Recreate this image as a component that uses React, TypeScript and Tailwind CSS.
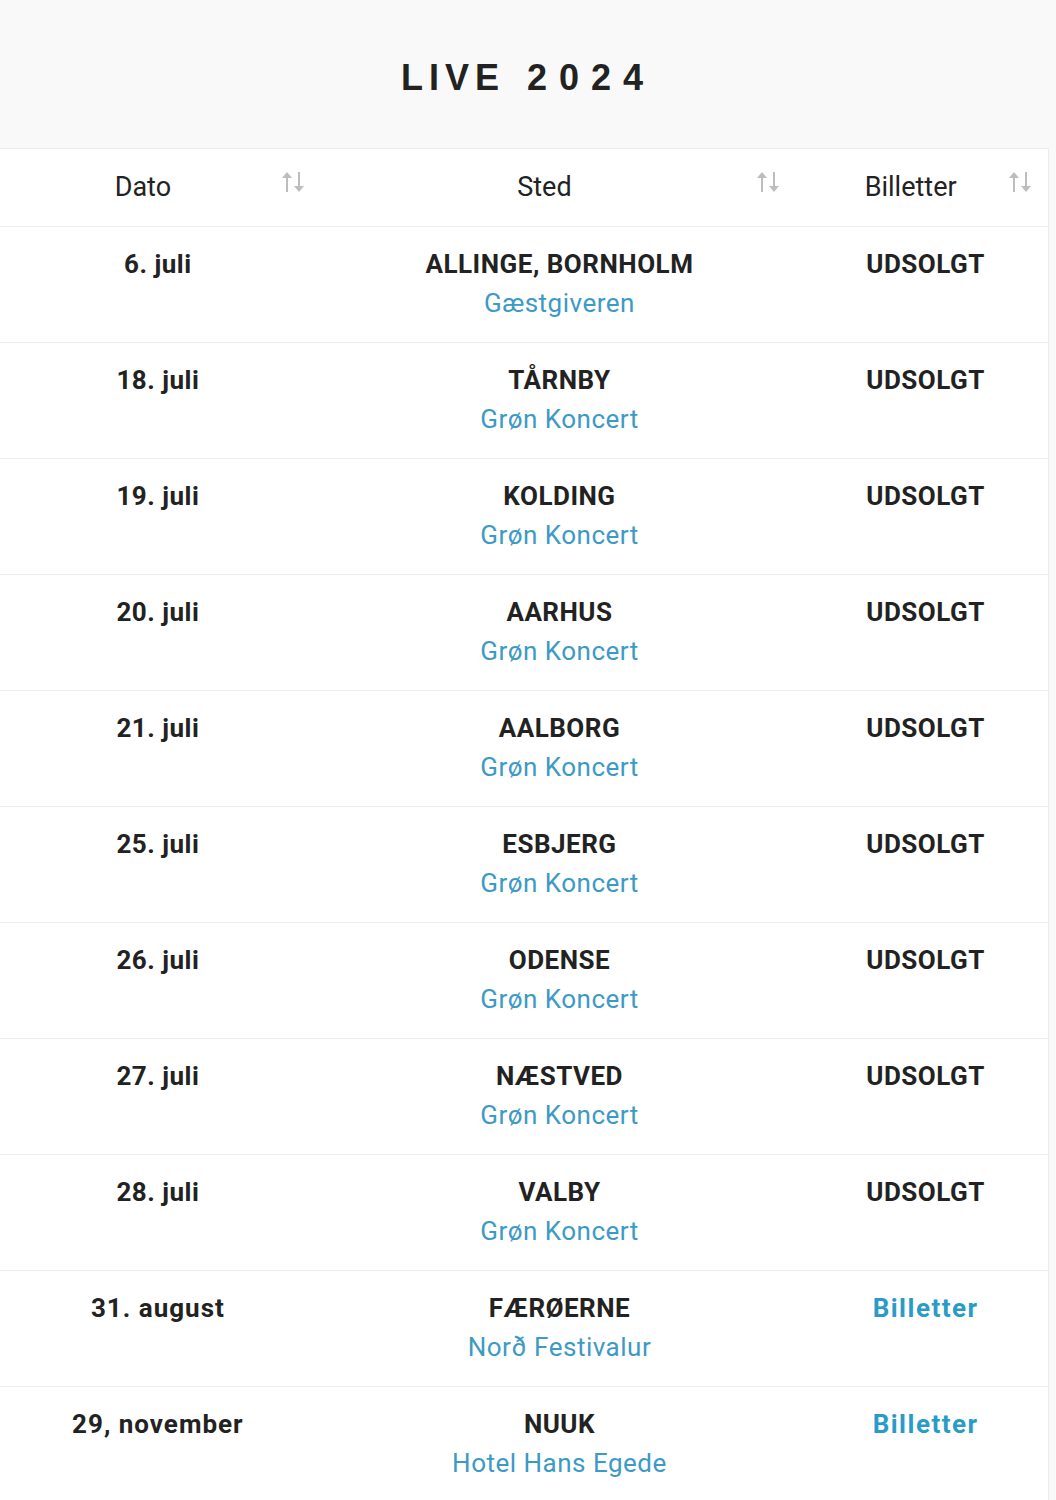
import React from "react";

type Row = { date: string; city: string; venue: string; ticket: string; link?: boolean };

const rows: Row[] = [
  { date: "6. juli", city: "ALLINGE, BORNHOLM", venue: "Gæstgiveren", ticket: "UDSOLGT" },
  { date: "18. juli", city: "TÅRNBY", venue: "Grøn Koncert", ticket: "UDSOLGT" },
  { date: "19. juli", city: "KOLDING", venue: "Grøn Koncert", ticket: "UDSOLGT" },
  { date: "20. juli", city: "AARHUS", venue: "Grøn Koncert", ticket: "UDSOLGT" },
  { date: "21. juli", city: "AALBORG", venue: "Grøn Koncert", ticket: "UDSOLGT" },
  { date: "25. juli", city: "ESBJERG", venue: "Grøn Koncert", ticket: "UDSOLGT" },
  { date: "26. juli", city: "ODENSE", venue: "Grøn Koncert", ticket: "UDSOLGT" },
  { date: "27. juli", city: "NÆSTVED", venue: "Grøn Koncert", ticket: "UDSOLGT" },
  { date: "28. juli", city: "VALBY", venue: "Grøn Koncert", ticket: "UDSOLGT" },
  { date: "31. august", city: "FÆRØERNE", venue: "Norð Festivalur", ticket: "Billetter", link: true },
  { date: "29, november", city: "NUUK", venue: "Hotel Hans Egede", ticket: "Billetter", link: true },
];

function SortIcon() {
  return (
    <svg width="24" height="22" viewBox="0 0 24 22" fill="none">
      <line x1="6" y1="5" x2="6" y2="21" stroke="#bdbdbd" strokeWidth="2" />
      <polygon points="1,7 6,1 11,7" fill="#bdbdbd" />
      <line x1="18" y1="1" x2="18" y2="17" stroke="#bdbdbd" strokeWidth="2" />
      <polygon points="13,15 18,21 23,15" fill="#bdbdbd" />
    </svg>
  );
}

export default function App() {
  return (
    <div className="min-h-[1500px] bg-[#f9f9f9]" style={{ fontFamily: "Roboto, 'Liberation Sans', sans-serif" }}>
      <div className="h-[148px] flex items-center justify-center">
        <h1
          className="flex text-[36px] font-bold text-[#222] pt-[8px]"
          style={{ fontFamily: "'Liberation Sans', Arial, sans-serif" }}
        >
          <span className="tracking-[6px]">LIVE</span>
          <span className="ml-[22px] tracking-[12px]">2024</span>
        </h1>
      </div>
      <div className="w-[1049px] bg-white border-r border-t border-[#ececec]">
        <div className="flex h-[78px] border-b border-[#ececec] text-[27px] text-[#222]">
          <div className="relative w-[316px] pr-[30px] flex items-center justify-center">
            <span>Dato</span>
            <div className="absolute right-[11px] top-[22px]"><SortIcon /></div>
          </div>
          <div className="relative w-[488px] pr-[30px] flex items-center justify-center">
            <span>Sted</span>
            <div className="absolute right-[23px] top-[22px]"><SortIcon /></div>
          </div>
          <div className="relative w-[245px] pr-[30px] flex items-center justify-center">
            <span>Billetter</span>
            <div className="absolute right-[16px] top-[22px]"><SortIcon /></div>
          </div>
        </div>
        {rows.map((r, i) => (
          <div key={i} className="flex border-b border-[#ececec] pt-[18px] pb-[19px] text-[26px] leading-[39px] text-center tracking-[0.5px]">
            <div className={"w-[316px] font-bold text-[#222] " + (r.link ? "tracking-[1px]" : "")}>{r.date}</div>
            <div className="w-[488px]">
              <div className="font-bold text-[#222]">{r.city}</div>
              <div className="text-[#3d9ac4]">{r.venue}</div>
            </div>
            <div className={"w-[245px] font-bold " + (r.link ? "text-[#2a9bc9] tracking-[1.5px]" : "text-[#222]")}>{r.ticket}</div>
          </div>
        ))}
      </div>
    </div>
  );
}
